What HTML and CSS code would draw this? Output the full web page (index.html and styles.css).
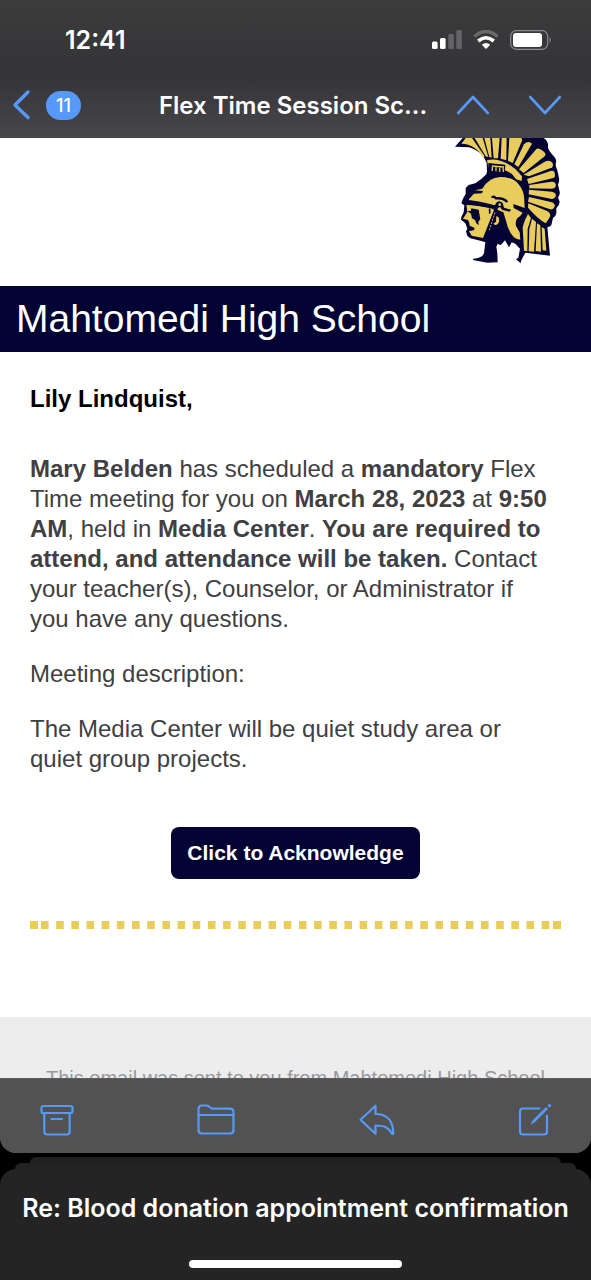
FILE: index.html
```html
<!DOCTYPE html>
<html lang="en">
<head>
<meta charset="utf-8">
<meta name="viewport" content="width=device-width, initial-scale=1">
<title>Mail</title>
<link rel="stylesheet" href="styles.css">
</head>
<body>
<div class="mail">
  <header class="top">
    <div class="status">
      <span class="clock">12:41</span>
      <div class="indicators">
        <svg width="30" height="20" viewBox="0 0 30 20" fill="#fff" aria-hidden="true">
          <rect x="0" y="11.500" width="5.600" height="7.500" rx="1.500"/>
          <rect x="8" y="8" width="5.600" height="11" rx="1.500"/>
          <rect x="16.300" y="4" width="5.600" height="15" rx="1.500" opacity=".22"/>
          <rect x="24.300" y="0" width="5.600" height="19" rx="1.500" opacity=".22"/>
        </svg>
        <svg width="26" height="20" viewBox="0 0 26 20" aria-hidden="true">
          <path d="M1.500 6.500Q13-3.500 24.500 6.500" fill="none" stroke="#fff" stroke-opacity=".25" stroke-width="3.600"/>
          <path d="M5.200 11Q13 4.500 20.800 11" fill="none" stroke="#fff" stroke-width="3.600"/>
          <path d="M13 19 8.800 14.700Q13 11.300 17.200 14.700Z" fill="#fff"/>
        </svg>
        <svg width="42" height="20" viewBox="0 0 42 20" aria-hidden="true">
          <rect x=".7" y=".7" width="37" height="18.600" rx="5.500" fill="none" stroke="#8b8b8e" stroke-width="1.200"/>
          <rect x="3" y="3" width="29" height="14" rx="3" fill="#fff"/>
          <path d="M39.500 7Q42 10 39.500 13Z" fill="#8b8b8e"/>
        </svg>
      </div>
    </div>
    <nav class="nav" aria-label="Message">
      <button class="back" aria-label="Back, 11 unread">
        <svg width="20" height="32" viewBox="0 0 20 32" aria-hidden="true"><path d="M16 3 3 16 16 28.500" class="stroke thick"/></svg>
        <span class="badge">11</span>
      </button>
      <h1 class="subject">Flex Time Session Sc...</h1>
      <div class="arrows">
        <button class="icon" aria-label="Previous message"><svg width="34" height="20" viewBox="0 0 34 20" aria-hidden="true"><path d="M2.200 18 17 2 31.800 18" class="stroke"/></svg></button>
        <button class="icon" aria-label="Next message"><svg width="34" height="20" viewBox="0 0 34 20" aria-hidden="true"><path d="M2.200 2 17 18 31.800 2" class="stroke"/></svg></button>
      </div>
    </nav>
  </header>

  <main class="message">
    <div class="logo">
      <svg width="107" height="127" viewBox="40 24 321 381" role="img" aria-label="Trojan head logo">
        <path fill="#040434" d="M43 50 66 24H309Q324 33 322 53Q323 59 331 69L343 83Q349 91 345 102Q344 108 350 121L355 144Q357 153 352 164L357 185Q359 192 352 203L357 215Q357 226 347 235L347 250Q346 259 337 264L332 285Q328 291 320 292L328 377 254 368 241 393 240 400 226 388 233 383 238 356 224 341 213 337 205 352 193 331 180 346 171 341 167 350 170 370 171 397 140 398 97 390 98 386Q124 385 130 370L134 337 122 333 89 325 80 318 76 304 80 296 74 280 61 269 62 261 69 247 71 226 62 220 68 204 75 192 75 174 84 165 104 160Q122 149 137 133L139 124 138 98Q124 62 85 52Z"/>
        <g fill="#e9cd5c">
          <path d="M62 41 75 24H94L132 79 127 82Q105 43 62 41Z"/>
          <path d="M102 24H126L143 81 135 79Z"/><path d="M131 24H149L153 83 146 81Z"/>
          <path d="M154 24H177L172 85H159Z"/><path d="M183 24H198L197 91 180 86Z"/>
          <path d="M206 24H240Q246 25 244 32L216 99 202 92Z"/>
          <path d="M250 43Q263 30 274 41L233 111 221 103Z"/>
          <path d="M284 61Q289 50 304 61Q320 72 312 79L249 129 235 118Z"/>
          <path d="M311 96Q327 88 335 98Q341 109 330 114L265 139 249 134Z"/>
          <path d="M259 147 330 123Q343 120 343 136Q343 144 335 145L264 162Z"/>
          <path d="M266 165 332 155Q348 154 345 169 343 176 334 176L266 175Z"/>
          <path d="M265 179 334 185Q348 188 345 199 342 208 333 207L264 193Z"/>
          <path d="M265 201 334 217Q346 223 341 232 337 241 326 237L262 215Z"/>
          <path d="M263 220 319 243Q334 251 326 264L315 280Q292 267 262 233Z"/>
          <path d="M139 90Q182 82 224 117L244 139 243 153 226 148 214 132Q178 109 143 111Z"/>
          <path d="M85 207 100 191 124 190 127 183 102 181 125 176Q144 143 178 141Q218 141 235 164 252 184 251 216L252 234 218 222 219 234 246 248 238 259Q222 267 226 288L237 307 239 329Q209 329 196 272L188 247 157 234 85 214Z"/>
          <path d="M77 222 152 235 160 240 127 324 93 317 85 304 101 300 101 293 87 287 86 280 82 270 67 266 80 246Z"/>
          <path d="M167 258Q181 263 173 280 166 289 158 281L166 275Z"/>
          <path d="M262 252 271 264 261 296 260 364 250 362 246 292Q251 270 262 252Z"/>
          <path d="M274 266 286 276 280 365 264 364 266 298Z"/>
          <path d="M289 280 299 286 301 365 285 363Z"/><path d="M303 291 312 296 317 362 306 361Z"/>
        </g>
        <g fill="#040434">
          <path d="M92 235 114 239 119 268 113 275 114 286 107 280 103 270 94 265 91 251 80 243 90 243Z"/>
          <path d="M143 99 194 104 192 129 143 124Z"/>
          <path d="M65 209Q116 211 162 226L169 216Q178 211 186 219L190 233 211 239 207 245 184 239 178 230 171 236 165 250 158 270 148 302 141 305 152 265 163 236 116 227 71 224Z"/>
        </g>
        <path d="M155 109V123M166 109V124M177 110V125M187 110 188 126M153 108 190 111" fill="none" stroke="#e9cd5c" stroke-width="4"/>
        <path d="M154 203Q157 196 166 205 188 203 200 216" fill="none" stroke="#040434" stroke-width="7"/>
        <path d="M163 247 146 300M218 129 237 148" fill="none" stroke="#e9cd5c" stroke-width="2.500" stroke-dasharray="7 3"/>
        <circle cx="177" cy="224" r="4" fill="#e9cd5c"/>
        <path d="M147 235V251" stroke="#040434" stroke-width="5"/>
      </svg>
    </div>
    <h2 class="school">Mahtomedi High School</h2>
    <div class="content">
      <h3 class="greeting">Lily Lindquist,</h3>
      <p><b>Mary Belden</b> has scheduled a <b>mandatory</b> Flex Time meeting for you on <b>March 28, 2023</b> at <b>9:50 AM</b>, held in <b>Media Center</b>. <b>You are required to attend, and attendance will be taken.</b> Contact your teacher(s), Counselor, or Administrator if you have any questions.</p>
      <p>Meeting description:</p>
      <p>The Media Center will be quiet study area or quiet group projects.</p>
      <button class="acknowledge">Click to Acknowledge</button>
      <div class="dots"></div>
    </div>
    <footer class="origin">This email was sent to you from Mahtomedi High School</footer>
  </main>

  <div class="toolbar">
    <button class="icon" aria-label="Archive"><svg width="34" height="32" viewBox="0 0 34 32" aria-hidden="true"><g class="stroke fine"><rect x="1.500" y="2" width="31" height="7" rx="1.800"/><path d="M4.300 9V27.500Q4.300 30.500 7.300 30.500H26.700Q29.700 30.500 29.700 27.500V9"/><path d="M11.500 15H22"/></g></svg></button>
    <button class="icon" aria-label="Move to folder"><svg width="38" height="32" viewBox="0 0 38 32" aria-hidden="true"><path class="stroke fine" d="M1.500 11V5Q1.500 1.500 5 1.500H9.500Q11 1.500 12.300 2.700L13.500 3.800Q14.500 4.700 16 4.700H33Q36.500 4.700 36.500 8.200V26Q36.500 29.500 33 29.500H5Q1.500 29.500 1.500 26V11H36.500"/></svg></button>
    <button class="icon" aria-label="Reply"><svg width="36" height="32" viewBox="0 0 36 32" aria-hidden="true"><path class="stroke fine" d="M16.500 1.700V10C28 10 34.300 17 34.300 29.800H33.300C29 23 25 21.500 16.500 21.500V29.800L1.500 15.800Z"/></svg></button>
    <button class="icon" aria-label="Compose"><svg width="34" height="34" viewBox="0 0 34 34" aria-hidden="true"><path class="stroke fine" d="M21.500 5.500H5Q2 5.500 2 8.500V28.500Q2 31.500 5 31.500H26Q29 31.500 29 28.500V12.500"/><path d="M12.500 21.500 14.500 17.500 28 4 30 6 16.500 19.500Z" fill="#5799f8"/><circle cx="31.500" cy="2.600" r="1.700" fill="#5799f8"/></svg></button>
  </div>
</div>

<div class="stack">
  <div class="sheet far"></div>
  <div class="sheet mid"></div>
  <div class="sheet front">
    <p class="next">Re: Blood donation appointment confirmation</p>
    <div class="home"></div>
  </div>
</div>
</body>
</html>
```
FILE: styles.css
```css
* { box-sizing: border-box; margin: 0; padding: 0; }

body {
  display: flex;
  flex-direction: column;
  height: 100vh;
  background: #000;
  color: #fff;
  font-family: Inter, "Liberation Sans", sans-serif;
}

button { border: 0; background: none; color: inherit; font: inherit; cursor: pointer; }
svg { display: block; flex: none; }

.stroke {
  fill: none;
  stroke: #5799f8;
  stroke-width: 2.6;
  stroke-linecap: round;
  stroke-linejoin: round;
}
.thick { stroke-width: 3.4; }
.fine { stroke-width: 2.2; }

.mail {
  display: flex;
  flex: 1;
  flex-direction: column;
  min-height: 0;
  overflow: hidden;
  border-radius: 0 0 16px 16px;
  background: #525252;
}

.top { background: linear-gradient(#3b3c3b, #343439 55%, #47474b); }

.status {
  display: flex;
  align-items: center;
  justify-content: space-between;
  height: 72px;
  padding: 8px 39px 0 65px;
}
.clock { font-size: 25px; font-weight: 600; line-height: 30px; }
.indicators { display: flex; gap: 11px; }

.nav {
  display: flex;
  align-items: center;
  justify-content: space-between;
  height: 66px;
  padding: 0 29px 0 12px;
}
.back { display: flex; align-items: center; gap: 14px; }
.badge {
  padding: 0 10px;
  border-radius: 15px;
  background: #5799f8;
  font-size: 18px;
  font-weight: 500;
  line-height: 29px;
}
.subject {
  flex: 1;
  padding-left: 78px;
  font-size: 24px;
  font-weight: 600;
  white-space: nowrap;
}
.arrows { display: flex; gap: 38px; }

.message {
  flex: 1;
  min-height: 0;
  overflow: hidden;
  background: #fff;
  color: #404043;
  font-family: "Liberation Sans", Arial, sans-serif;
}
.logo { display: flex; justify-content: flex-end; padding: 0 30px 21px 0; }
.school {
  padding: 0 16px;
  background: #040434;
  color: #fff;
  font-size: 39px;
  font-weight: 400;
  line-height: 66px;
}
.content {
  display: flex;
  flex-direction: column;
  gap: 25px;
  padding: 32px 30px 88px;
  font-size: 24px;
  line-height: 30px;
}
.content p { padding-right: 8px; }
.greeting { padding-bottom: 15px; color: #000; font-size: 24px; }
.acknowledge {
  align-self: center;
  margin-top: 28px;
  padding: 0 16px;
  border-radius: 8px;
  background: #040434;
  color: #fff;
  font-size: 21px;
  font-weight: 700;
  line-height: 52px;
}
.dots {
  height: 8px;
  margin-top: 17px;
  padding: 0 4px 0 11px;
  background:
    linear-gradient(#e9cd5c, #e9cd5c) left / 8px 8px no-repeat border-box,
    linear-gradient(#e9cd5c, #e9cd5c) right / 8px 8px no-repeat border-box,
    linear-gradient(90deg, #e9cd5c 8px, transparent 8px) left / 15px 8px round content-box;
}
.origin {
  padding: 46px 20px 30px;
  background: #ededed;
  color: #97999d;
  font-size: 20px;
  line-height: 30px;
  text-align: center;
  white-space: nowrap;
}

.toolbar {
  display: flex;
  align-items: center;
  justify-content: space-between;
  height: 75px;
  padding: 8px 39px 0 40px;
  border-top: 1px solid #5c5c5c;
  background: #525252;
}

.stack { padding-top: 4px; }
.sheet { border-radius: 16px 16px 0 0; background: #242424; }
.far { height: 6px; margin: 0 30px; background: #202021; }
.mid { height: 6px; margin: 0 15px; background: #222223; }
.front { padding: 24px 0 12px; }
.next {
  font-size: 25px;
  font-weight: 600;
  line-height: 30px;
  text-align: center;
  white-space: nowrap;
}
.home { width: 36%; height: 8px; margin: 37px auto 0; border-radius: 4px; background: #fff; }
```
